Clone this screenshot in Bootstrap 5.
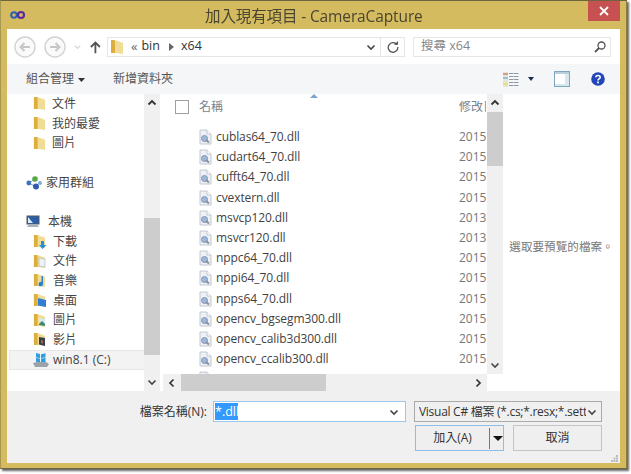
<!DOCTYPE html>
<html lang="zh-Hant">
<head>
<meta charset="utf-8">
<title>加入現有項目 - CameraCapture</title>
<link href="https://cdn.jsdelivr.net/npm/bootstrap@5.3.0/dist/css/bootstrap.min.css" rel="stylesheet">
<style>
html,body{margin:0;background:#fff;height:474px;overflow:hidden}
body{font-family:"Open Sans","Noto Sans CJK TC",sans-serif;font-size:12px;color:#3c3c3c;line-height:1}
.shell{width:627px;height:469px;background:#d4bb5f;border:1px solid #6d6440;border-left-color:#a8974f;border-right-color:#8a7c45;box-shadow:2px 2px 2px #666;filter:blur(.35px);display:flex;flex-direction:column;padding:0 6px 5px 6px}
.capbar{height:28px;flex:none;position:relative}
.captxt{font-size:15.5px;color:#4a4630;letter-spacing:-.12px;padding-left:198px;padding-top:6px;line-height:18px}
.xbtn{position:absolute;right:0;top:0;width:32px;height:20px;background:#c75050;border:0;padding:0;display:flex;align-items:center;justify-content:center;border-radius:0}
.client{flex:1;display:flex;flex-direction:column;background:#fff;min-height:0}
.addr{height:35px;flex:none;display:flex;align-items:center;padding:0 9px 0 7px}
.round{width:22px;height:22px;flex:none}
.fieldbox{height:20px;border:1px solid #e6e6e6;display:flex;align-items:center;background:#fff}
.crumbs{width:298px;margin-left:3px;padding-left:2px;flex:none;color:#333;font-size:12.5px}
.srch{width:198px;margin-left:8px;flex:none;padding:0 4px 0 7px;color:#888;font-size:12.5px}
.tools{height:30px;flex:none;background:#f5f6f7;display:flex;align-items:center;padding-left:19px;color:#555}
.bodyrow{height:297px;flex:none;display:flex}
.tree{width:137px;flex:none;overflow:hidden}
.tr{height:19.68px;display:flex;align-items:center;padding-left:26px;color:#444;white-space:nowrap}
.tr svg{flex:none;margin-right:6px}
.tg{padding-left:19px}
.tg svg{margin-right:4px}
.sel{background:#f3f3f3;border:1px solid #e6e6e6;border-right:0;margin-left:2px;padding-left:23px;height:20px}
.vbar{width:16px;flex:none;background:#f0f0f0;display:flex;flex-direction:column;align-items:center}
.arr{height:18px;flex:none;display:flex;align-items:center;justify-content:center}
.thumb{background:#cdcdcd;width:100%}
.files{width:343px;flex:none;display:flex;flex-wrap:wrap;align-content:flex-start;padding-left:3px}
.listcol{width:324px;height:280px;overflow:hidden}
.hdr{height:33px;display:flex;position:relative;color:#7a8794;padding-left:12px;padding-top:6px}
.chk{width:14px;height:14px;border:1px solid #a0a0a0;background:#fff;flex:none}
.hn{margin-left:10px;font-size:12px;margin-top:1px;width:260px;flex:none;color:#76838f}
.hd{width:27px;overflow:hidden;white-space:nowrap;flex:none;margin-top:1px;color:#76838f}
.sortm{position:absolute;left:147px;top:0}
.fr{height:20.2px;display:flex;align-items:center;padding-left:35px;white-space:nowrap;color:#3f3f3f}
.fr svg{flex:none;margin-right:3px}
.fn{width:243px;flex:none;letter-spacing:-.09px}
.fd{width:27px;overflow:hidden;flex:none;color:#777}
.v2{height:280px;width:16px;margin-left:0}
.hbar{width:324px;height:17px;background:#f0f0f0;display:flex;align-items:center}
.hend{width:18px;flex:none;display:flex;justify-content:center}
.hth{width:145px;height:100%;background:#cdcdcd;flex:none}
.prev{flex:1;position:relative;display:flex;align-items:center;justify-content:center;padding-top:9px;color:#777;font-size:11.5px;letter-spacing:.1px;white-space:nowrap}
.foot{flex:1;background:#f0f0f0;position:relative;display:flex;flex-direction:column;padding:10px 18px 0 0;align-items:flex-end;gap:3px}
.l1,.l2{display:flex;align-items:center}
.lab{margin-right:6px;color:#333}
.combo{width:193px;height:21px;border:1px solid #99c7ee;background:#fff;display:flex;align-items:center;padding:0 6px 0 1px;justify-content:space-between;margin-right:8px}
.picked{background:#3399ff;color:#fff;display:block;width:23px;height:17px;line-height:17px;font-size:12.5px;white-space:nowrap}
.filt{width:188px;height:21px;border:1px solid #ababab;background:#f0f0f0;display:flex;align-items:center;justify-content:space-between;padding:0 4px;color:#333;white-space:nowrap;overflow:hidden}
.filt span{width:167px;overflow:hidden;letter-spacing:-.28px}
.wbtn{height:26px;border-radius:0;padding:0;font-size:12px;color:#333;background:#efefef;display:flex;align-items:center;justify-content:center;line-height:1}
.wbtn:hover{color:#333;background:#efefef}
.addb{width:89px;border:1px solid #8ebde8;margin-right:9px}
.addb b{font-weight:400;width:73px;text-align:center}
.addb i{display:block;width:1px;height:21px;background:#777;margin-right:3px}
.cancel{width:89px;border:1px solid #c4c4c4}
.grip{position:absolute;right:2px;bottom:1px}
</style>
</head>
<body>
<svg width="0" height="0" class="d-none" aria-hidden="true">
<defs>
<linearGradient id="fg" x1="0" x2="1" y1="0" y2="0"><stop offset="0" stop-color="#e8c25c"/><stop offset="1" stop-color="#f3dd96"/></linearGradient>
<symbol id="fold" viewBox="0 0 14 16"><path d="M1 1h4l8 3v11l-7-1H1z" fill="#f0dc95"/><path d="M1 1h3l1 1v12H1z" fill="#dcae3c"/><path d="M5 3l8 1v11l-8-1.500z" fill="url(#fg)"/></symbol>
<symbol id="dll" viewBox="0 0 15 16"><path d="M2 1h7l4 4v10H2z" fill="#eef1f5" stroke="#c2c8d0"/><path d="M9 1v4h4" fill="#fff" stroke="#c2c8d0"/><circle cx="6.500" cy="9.500" r="3" fill="#9fb7d8" stroke="#7f97b8"/><path d="M8 11l3 2.500" stroke="#8a8f99" stroke-width="2"/></symbol>
<symbol id="downa" viewBox="0 0 10 10"><path d="M1.500 3.500L5 7l3.500-3.500" fill="none" stroke="#444" stroke-width="1.600"/></symbol>
<symbol id="upa" viewBox="0 0 10 10"><path d="M1.500 6.500L5 3l3.500 3.500" fill="none" stroke="#333" stroke-width="1.800"/></symbol>
</defs>
</svg>
<div class="shell">
  <div class="capbar">
    <svg class="position-absolute" style="left:3px;top:9px" width="16" height="10" viewBox="0 0 16 10"><circle cx="4" cy="5" r="2.800" fill="none" stroke="#2a5fb5" stroke-width="2"/><circle cx="11" cy="5" r="3" fill="none" stroke="#5a2a9c" stroke-width="2.200"/></svg>
    <div class="captxt">加入現有項目 - CameraCapture</div>
    <button class="xbtn" type="button" aria-label="關閉"><svg width="10" height="10" viewBox="0 0 10 10"><path d="M1 1l8 8M9 1l-8 8" stroke="#fff" stroke-width="1.800"/></svg></button>
  </div>
  <div class="client">
    <div class="addr">
      <svg class="round" viewBox="0 0 22 22"><circle cx="11" cy="11" r="10" fill="#fafafa" stroke="#d2d2d2" stroke-width="1.400"/><path d="M16 11H7M10.500 7l-4 4 4 4" fill="none" stroke="#c6c6c6" stroke-width="2"/></svg>
      <svg class="round" style="margin-left:8px" viewBox="0 0 22 22"><circle cx="11" cy="11" r="10" fill="#fafafa" stroke="#d2d2d2" stroke-width="1.400"/><path d="M6 11h9M11.500 7l4 4-4 4" fill="none" stroke="#c6c6c6" stroke-width="2"/></svg>
      <svg class="ms-2" width="8" height="6" viewBox="0 0 8 6"><path d="M1 1.500L4 4.500 7 1.500" fill="none" stroke="#d4d4d4" stroke-width="1.300"/></svg>
      <svg style="margin-left:9px" width="12" height="14" viewBox="0 0 12 14"><path d="M6 14V2M1 7l5-5 5 5" fill="none" stroke="#555" stroke-width="2"/></svg>
      <div class="fieldbox crumbs" style="margin-left:6px">
        <svg width="14" height="16" class="flex-none"><use href="#fold"/></svg>
        <span style="margin-left:7px;color:#666;font-size:13px">«</span>
        <span style="margin-left:4px">bin</span>
        <svg style="margin-left:9px" width="5" height="8" viewBox="0 0 5 8"><path d="M0 0l5 4-5 4z" fill="#666"/></svg>
        <span style="margin-left:7px">x64</span>
        <svg class="ms-auto" width="10" height="10"><use href="#downa"/></svg>
        <span style="width:1px;height:18px;background:#e6e6e6;margin:0 6px 0 4px"></span>
        <svg style="margin-right:5px" width="12" height="12" viewBox="0 0 12 12"><path d="M9.800 3.500A4.800 4.800 0 1 0 10.800 6" fill="none" stroke="#555" stroke-width="1.300"/><path d="M7 3.800h4V0z" fill="#555"/></svg>
      </div>
      <div class="fieldbox srch">
        <span>搜尋 x64</span>
        <svg class="ms-auto" width="12" height="12" viewBox="0 0 12 12"><circle cx="7.500" cy="4.500" r="3.500" fill="none" stroke="#555" stroke-width="1.300"/><path d="M5 7l-4 4" stroke="#555" stroke-width="1.800"/></svg>
      </div>
    </div>
    <div class="tools">
      <span>組合管理</span>
      <svg class="ms-1" style="margin-top:1px" width="7" height="4" viewBox="0 0 7 4"><path d="M0 0h7L3.500 4z" fill="#333"/></svg>
      <span style="margin-left:28px">新增資料夾</span>
      <svg style="margin-left:330px" width="16" height="15" viewBox="0 0 16 15"><rect x="0" y="0" width="5" height="15" fill="#e4e8c8"/><path d="M0 2h5" stroke="#d49a9a" stroke-width="2"/><path d="M0 6h5" stroke="#9ac0e0" stroke-width="2"/><path d="M0 12h5" stroke="#e8dc90" stroke-width="2"/><path d="M6 1.500h10M6 4.500h10M6 7.500h10M6 10.500h10M6 13.500h10" stroke="#8d97a5" stroke-width="1.200" stroke-dasharray="4.500 .5"/></svg>
      <svg style="margin-left:9px" width="6" height="4" viewBox="0 0 6 4"><path d="M0 0h6L3 4z" fill="#1d2b4f"/></svg>
      <svg style="margin-left:20px" width="16" height="16" viewBox="0 0 16 16"><rect x=".5" y=".5" width="15" height="15" fill="#fff" stroke="#7fa6bf"/><rect x="11" y="1" width="4" height="14" fill="#d7e8f0"/><rect x="1" y="13" width="14" height="2" fill="#d7e8f0"/><rect x="1" y="1" width="14" height="2" fill="#b9cfdc"/></svg>
      <svg style="margin-left:21px" width="14" height="14" viewBox="0 0 14 14"><circle cx="7" cy="7" r="6.800" fill="#2246b8"/><path d="M4.800 5.200C5 2.800 9.300 3 9.200 5.300 9.100 7 7 6.800 7 8.500" fill="none" stroke="#fff" stroke-width="1.600"/><rect x="6.100" y="9.500" width="1.800" height="1.800" fill="#fff"/></svg>
    </div>
    <div class="bodyrow">
      <div class="tree">
        <div class="tr"><svg width="13" height="15"><use href="#fold"/></svg>文件</div>
        <div class="tr"><svg width="13" height="15"><use href="#fold"/></svg>我的最愛</div>
        <div class="tr"><svg width="13" height="15"><use href="#fold"/></svg>圖片</div>
        <div class="tr"></div>
        <div class="tr tg"><svg width="16" height="14" viewBox="0 0 16 14"><path d="M9 3L3 7l7 4" fill="none" stroke="#7aa0c8"/><circle cx="9" cy="3" r="2.800" fill="#58a845"/><circle cx="2.800" cy="7" r="2.400" fill="#3d6fc0"/><circle cx="10" cy="10.500" r="3" fill="#2f5cb0"/><circle cx="14" cy="7" r="2" fill="#7eaedb"/></svg>家用群組</div>
        <div class="tr"></div>
        <div class="tr tg"><svg width="14" height="13" viewBox="0 0 14 13"><rect x="1" y="1" width="12" height="8" fill="#2a5ea8" stroke="#4e5a68"/><path d="M2 2l5 6H2z" fill="#dcecf8"/><path d="M3 9h8l2 3H1z" fill="#a8b0ba"/></svg><span class="ms-1">本機</span></div>
        <div class="tr"><svg width="14" height="15" viewBox="0 0 14 15"><use href="#fold" width="13" height="15"/><path d="M8 7h3v4h2.500L9.500 15 6 11h2z" fill="#2b8fd8"/></svg>下載</div>
        <div class="tr"><svg width="14" height="15" viewBox="0 0 14 15"><use href="#fold" width="13" height="15"/><path d="M6 4l6 1v8l-6-1z" fill="#eef2f6" stroke="#aab4c0" stroke-width=".6"/></svg>文件</div>
        <div class="tr"><svg width="14" height="15" viewBox="0 0 14 15"><use href="#fold" width="13" height="15"/><path d="M10 3v8a2.200 2.200 0 1 1-1.500-2V3z" fill="#2b7fd0"/></svg>音樂</div>
        <div class="tr"><svg width="14" height="15" viewBox="0 0 14 15"><use href="#fold" width="13" height="15"/><path d="M5 5l8 2v7l-8-1.500z" fill="#2f7fd6"/></svg>桌面</div>
        <div class="tr"><svg width="14" height="15" viewBox="0 0 14 15"><use href="#fold" width="13" height="15"/><path d="M6 5l6 1v7l-6-1z" fill="#d8e8f2"/><path d="M6 11l3-3 3 3v2l-6-1z" fill="#3d8a68"/></svg>圖片</div>
        <div class="tr"><svg width="14" height="15" viewBox="0 0 14 15"><use href="#fold" width="13" height="15"/><path d="M6 5l6 1v8l-6-1.500z" fill="#35404c"/><path d="M8 8l2 .500v3l-2-.500z" fill="#c05a50"/></svg>影片</div>
        <div class="tr sel"><svg width="16" height="14" viewBox="0 0 16 14" style="margin-right:4px"><path d="M3 0l4 1v4L3 4.500zM8 1.200l4.500-1V4.500L8 5zM3 5l4 .500v4L3 9zM8 5.500l4.500-.500V9L8 9.500z" fill="#2f9fe0"/><path d="M0 10l4-1h9l3 2-2 3H2z" fill="#9aa3ab"/></svg>win8.1 (C:)</div>
      </div>
      <div class="vbar">
        <div class="arr"><svg width="10" height="10"><use href="#upa"/></svg></div>
        <div style="height:106px"></div>
        <div class="thumb" style="height:137px"></div>
        <div class="flex-grow-1"></div>
        <div class="arr"><svg width="10" height="10"><use href="#downa"/></svg></div>
      </div>
      <div class="files">
        <div class="listcol">
          <div class="hdr">
            <svg class="sortm" width="8" height="4" viewBox="0 0 8 4"><path d="M4 0l4 4H0z" fill="#7aa5d0"/></svg>
            <span class="chk"></span>
            <span class="hn">名稱</span>
            <span class="hd">修改日期</span>
          </div>
          <div class="fr"><svg width="15" height="16"><use href="#dll"/></svg><span class="fn">cublas64_70.dll</span><span class="fd">2015/</span></div>
          <div class="fr"><svg width="15" height="16"><use href="#dll"/></svg><span class="fn">cudart64_70.dll</span><span class="fd">2015/</span></div>
          <div class="fr"><svg width="15" height="16"><use href="#dll"/></svg><span class="fn">cufft64_70.dll</span><span class="fd">2015/</span></div>
          <div class="fr"><svg width="15" height="16"><use href="#dll"/></svg><span class="fn">cvextern.dll</span><span class="fd">2015/</span></div>
          <div class="fr"><svg width="15" height="16"><use href="#dll"/></svg><span class="fn">msvcp120.dll</span><span class="fd">2013/</span></div>
          <div class="fr"><svg width="15" height="16"><use href="#dll"/></svg><span class="fn">msvcr120.dll</span><span class="fd">2013/</span></div>
          <div class="fr"><svg width="15" height="16"><use href="#dll"/></svg><span class="fn">nppc64_70.dll</span><span class="fd">2015/</span></div>
          <div class="fr"><svg width="15" height="16"><use href="#dll"/></svg><span class="fn">nppi64_70.dll</span><span class="fd">2015/</span></div>
          <div class="fr"><svg width="15" height="16"><use href="#dll"/></svg><span class="fn">npps64_70.dll</span><span class="fd">2015/</span></div>
          <div class="fr"><svg width="15" height="16"><use href="#dll"/></svg><span class="fn">opencv_bgsegm300.dll</span><span class="fd">2015/</span></div>
          <div class="fr"><svg width="15" height="16"><use href="#dll"/></svg><span class="fn">opencv_calib3d300.dll</span><span class="fd">2015/</span></div>
          <div class="fr"><svg width="15" height="16"><use href="#dll"/></svg><span class="fn">opencv_ccalib300.dll</span><span class="fd">2015/</span></div>
          <div class="fr"><svg width="15" height="16"><use href="#dll"/></svg></div>
        </div>
        <div class="vbar v2">
          <div class="arr"><svg width="10" height="10"><use href="#upa"/></svg></div>
          <div class="thumb" style="height:54px"></div>
          <div class="flex-grow-1"></div>
          <div class="arr"><svg width="10" height="10"><use href="#downa"/></svg></div>
        </div>
        <div class="hbar">
          <div class="hend"><svg width="10" height="10" viewBox="0 0 10 10"><path d="M6.500 1.500L3 5l3.500 3.500" fill="none" stroke="#333" stroke-width="1.700"/></svg></div>
          <div class="hth"></div>
          <div class="hend ms-auto"><svg width="10" height="10" viewBox="0 0 10 10"><path d="M3.500 1.500L7 5 3.500 8.500" fill="none" stroke="#333" stroke-width="1.700"/></svg></div>
        </div>
      </div>
      <div class="prev">選取要預覽的檔案。</div>
    </div>
    <div class="foot">
      <div class="l1">
        <span class="lab">檔案名稱(N):</span>
        <div class="combo"><span class="picked">*.dll</span><svg width="10" height="10"><use href="#downa"/></svg></div>
        <div class="filt"><span>Visual C# 檔案 (*.cs;*.resx;*.settings</span><svg width="10" height="10" class="flex-none"><use href="#downa"/></svg></div>
      </div>
      <div class="l2">
        <button class="btn wbtn addb" type="button"><b>加入(A)</b><i></i><svg width="10" height="5" viewBox="0 0 10 5"><path d="M0 0h10L5 5z" fill="#111"/></svg></button>
        <button class="btn wbtn cancel" type="button">取消</button>
      </div>
      <svg class="grip" width="7" height="7" viewBox="0 0 7 7"><path d="M5 0h2v2H5zM2.500 2.500h2v2h-2zM5 2.500h2v2H5zM0 5h2v2H0zM2.500 5h2v2h-2zM5 5h2v2H5z" fill="#bbb"/></svg>
    </div>
  </div>
</div>
</body>
</html>
